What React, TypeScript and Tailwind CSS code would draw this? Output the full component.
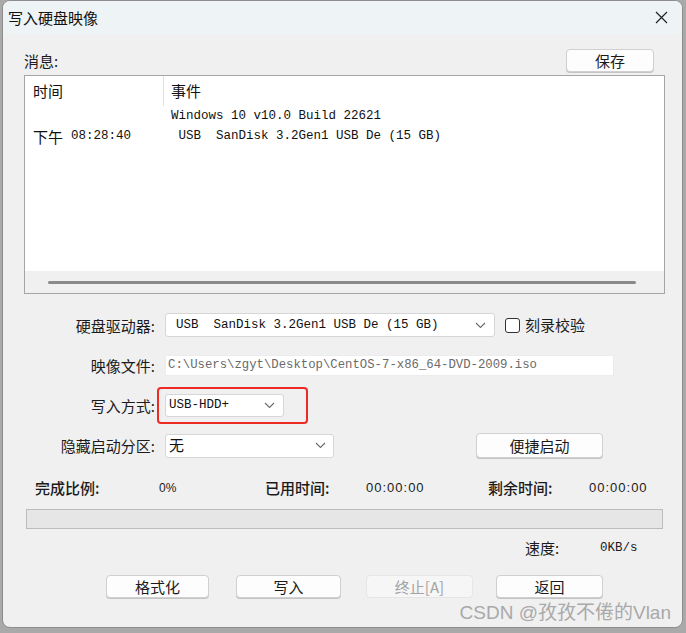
import React from "react";

const cjk = { fontFamily: '"Noto Sans CJK SC", "Noto Sans", sans-serif' };
const mono = { fontFamily: '"Liberation Mono", "Noto Sans CJK SC", monospace' };
const sans = { fontFamily: '"Liberation Sans", "Noto Sans CJK SC", sans-serif' };

function Chevron() {
  return (
    <svg width="11" height="7" viewBox="0 0 11 7" className="shrink-0">
      <polyline points="1,1 5.5,5.5 10,1" fill="none" stroke="#6a6a6a" strokeWidth="1.1" />
    </svg>
  );
}

function Btn({ children, disabled, className = "" }: { children: React.ReactNode; disabled?: boolean; className?: string }) {
  return (
    <div
      style={cjk}
      className={
        "h-[23px] flex items-center justify-center rounded-[4px] border text-[15px] leading-none " +
        (disabled
          ? "bg-[#f6f6f6] border-[#e6e6e6] text-[#a3a3a3] "
          : "bg-[#fdfdfd] border-[#d0d0d0] text-[#1b1b1b] shadow-[0_1px_0_#c4c4c4] ") +
        className
      }
    >
      {children}
    </div>
  );
}

function Label({ children }: { children: React.ReactNode }) {
  return (
    <div style={cjk} className="w-[154px] shrink-0 text-right pr-[2px] text-[15px] text-[#1b1b1b] leading-none">
      {children}
    </div>
  );
}

export default function App() {
  return (
    <div className="w-[686px] h-[633px] bg-[#a9a9a9] pl-[2px] pr-[3px] pb-[5px] flex">
      <div className="flex-1 flex flex-col rounded-[8px] border border-[#8d8d8d] bg-[#f0f0f0] overflow-hidden relative">
        {/* title bar */}
        <div className="h-[33px] shrink-0 bg-[#eef3f6] flex items-center justify-between pl-[5px] pr-[14px]">
          <div style={cjk} className="text-[15px] text-[#111] leading-none">写入硬盘映像</div>
          <svg width="13" height="13" viewBox="0 0 13 13">
            <path d="M1 1 L12 12 M12 1 L1 12" stroke="#222" strokeWidth="1.2" />
          </svg>
        </div>

        {/* body */}
        <div className="flex-1 flex flex-col">
          {/* 消息 row */}
          <div className="mt-[15px] h-[26px] flex items-start justify-between pl-[21px] pr-[28px]">
            <div style={cjk} className="mt-[2px] h-[20px] leading-[20px] text-[15px] text-[#1b1b1b]">消息:</div>
            <Btn className="w-[88px] h-[22px]">保存</Btn>
          </div>

          {/* list */}
          <div className="ml-[21px] mr-[17px] h-[219px] border border-[#a5a5a5] bg-white flex flex-col">
            <div className="h-[30px] flex items-stretch">
              <div style={cjk} className="w-[138px] pl-[8px] flex items-center text-[15px] text-[#111]">时间</div>
              <div className="w-px bg-[#e2e2e2]" />
              <div style={cjk} className="pl-[7px] flex items-center text-[15px] text-[#111]">事件</div>
            </div>
            <div className="h-[20px] flex items-center">
              <div className="w-[139px]" />
              <div style={mono} className="pl-[7px] text-[12.5px] text-[#111] whitespace-pre">Windows 10 v10.0 Build 22621</div>
            </div>
            <div className="h-[20px] flex items-center">
              <div className="w-[139px] pl-[8px] flex items-center text-[#111]">
                <span style={cjk} className="text-[15px] leading-none">下午</span>
                <span style={mono} className="ml-[8px] text-[12.5px] leading-none">08:28:40</span>
              </div>
              <div style={mono} className="pl-[7px] text-[12.5px] text-[#111] whitespace-pre"> USB  SanDisk 3.2Gen1 USB De (15 GB)</div>
            </div>
            <div className="flex-1" />
            <div className="h-[22px] bg-[#f0f0f0] flex items-center pl-[23px] pr-[28px]">
              <div className="flex-1 h-[3px] rounded-full bg-[#8a8a8a]" />
            </div>
          </div>

          {/* form rows */}
          <div className="mt-[19px] h-[24px] flex items-center">
            <Label>硬盘驱动器:</Label>
            <div className="ml-[8px] w-[330px] h-[24px] bg-white border border-[#d6d6d6] rounded-[3px] flex items-center justify-between pl-[10px] pr-[8px]">
              <span style={mono} className="text-[12.5px] text-[#111] whitespace-pre">USB  SanDisk 3.2Gen1 USB De (15 GB)</span>
              <Chevron />
            </div>
            <div className="ml-[10px] w-[15px] h-[15px] rounded-[3px] border border-[#333] bg-white" />
            <span style={cjk} className="ml-[5px] text-[15px] text-[#1b1b1b]">刻录校验</span>
          </div>

          <div className="mt-[18px] h-[21px] flex items-center">
            <Label>映像文件:</Label>
            <div className="ml-[8px] w-[449px] h-[21px] bg-white border border-[#ececec] flex items-center pl-[2px]">
              <span style={mono} className="text-[12.3px] text-[#6a6a6a] whitespace-pre">C:\Users\zgyt\Desktop\CentOS-7-x86_64-DVD-2009.iso</span>
            </div>
          </div>

          <div className="mt-[18px] h-[23px] flex items-center">
            <Label>写入方式:</Label>
            <div className="ml-[8px] relative">
              <div className="w-[119px] h-[23px] bg-white border border-[#d6d6d6] rounded-[3px] flex items-center justify-between pl-[3px] pr-[8px]">
                <span style={mono} className="text-[12.5px] text-[#111]">USB-HDD+</span>
                <Chevron />
              </div>
              <div className="absolute left-[-8px] top-[-7px] w-[151px] h-[37px] border-[2px] border-[#ee2a24] rounded-[4px]" />
            </div>
          </div>

          <div className="mt-[16px] h-[25px] flex items-center">
            <Label>隐藏启动分区:</Label>
            <div className="ml-[8px] w-[169px] h-[24px] bg-white border border-[#d6d6d6] rounded-[3px] flex items-center justify-between pl-[3px] pr-[7px]">
              <span style={cjk} className="text-[15px] text-[#111]">无</span>
              <Chevron />
            </div>
            <Btn className="ml-[142px] w-[127px] h-[25px]">便捷启动</Btn>
          </div>

          {/* progress labels */}
          <div className="mt-[20px] h-[20px] flex items-center pl-[32px] text-[#1b1b1b]">
            <div style={cjk} className="w-[124px] text-[15px] font-medium">完成比例:</div>
            <div style={sans} className="w-[106px] text-[12px]">0%</div>
            <div style={cjk} className="w-[101px] text-[15px] font-medium">已用时间:</div>
            <div style={sans} className="w-[122px] text-[13px] tracking-[1px]">00:00:00</div>
            <div style={cjk} className="w-[101px] text-[15px] font-medium">剩余时间:</div>
            <div style={sans} className="text-[13px] tracking-[1px]">00:00:00</div>
          </div>

          <div className="mt-[11px] ml-[23px] w-[637px] h-[20px] border border-[#bcbcbc] bg-[#e6e6e6]" />

          <div className="mt-[9px] h-[20px] flex items-center pl-[522px]">
            <div style={cjk} className="w-[75px] text-[15px] text-[#1b1b1b]">速度:</div>
            <div style={mono} className="text-[12.5px] text-[#1b1b1b]">0KB/s</div>
          </div>

          <div className="mt-[17px] flex items-center pl-[103px]">
            <Btn className="w-[103px]">格式化</Btn>
            <Btn className="ml-[27px] w-[105px]">写入</Btn>
            <Btn disabled className="ml-[25px] w-[107px]">终止[A]</Btn>
            <Btn className="ml-[23px] w-[107px]">返回</Btn>
          </div>
        </div>

        <div style={sans} className="absolute right-[11px] bottom-[2px] text-[19px] text-[#a9a9a9] leading-[24px] whitespace-nowrap">
          CSDN @<span style={cjk}>孜孜不倦的</span>Vlan
        </div>
      </div>
    </div>
  );
}
